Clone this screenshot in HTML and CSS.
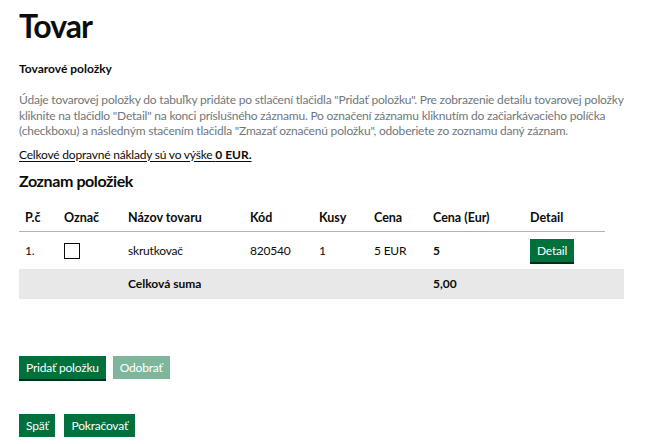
FILE: index.html
```html
<!DOCTYPE html>
<html lang="sk">
<head>
<meta charset="utf-8">
<title>Tovar</title>
<link rel="stylesheet" href="styles.css">
</head>
<body>
<main class="page">
  <h1 class="title">Tovar</h1>
  <h2 class="subtitle">Tovarové položky</h2>
  <p class="hint">Údaje tovarovej položky do tabuľky pridáte po stlačení tlačidla "Pridať položku". Pre zobrazenie detailu tovarovej položky kliknite na tlačidlo "Detail" na konci príslušného záznamu. Po označení záznamu kliknutím do začiarkávacieho políčka (checkboxu) a následným stačením tlačidla "Zmazať označenú položku", odoberiete zo zoznamu daný záznam.</p>
  <p class="shipping">Celkové dopravné náklady sú vo výške <strong>0 EUR.</strong></p>
  <h2 class="section">Zoznam položiek</h2>
  <table class="items">
    <colgroup>
      <col class="c-no"><col class="c-mark"><col class="c-name"><col class="c-code"><col class="c-qty"><col class="c-price"><col class="c-eur"><col class="c-detail"><col class="c-pad">
    </colgroup>
    <thead>
      <tr><th>P.č</th><th>Označ</th><th>Názov tovaru</th><th>Kód</th><th>Kusy</th><th>Cena</th><th>Cena (Eur)</th><th>Detail</th><th class="pad"></th></tr>
    </thead>
    <tbody>
      <tr class="row">
        <td>1.</td>
        <td><span class="checkbox"></span></td>
        <td>skrutkovač</td>
        <td>820540</td>
        <td>1</td>
        <td>5 EUR</td>
        <td class="strong">5</td>
        <td><button class="btn btn-small">Detail</button></td>
        <td></td>
      </tr>
      <tr class="total">
        <td></td><td></td><td class="strong">Celková suma</td><td></td><td></td><td></td><td class="strong">5,00</td><td></td><td></td>
      </tr>
    </tbody>
  </table>
  <div class="actions actions-top">
    <button class="btn">Pridať položku</button>
    <button class="btn btn-disabled">Odobrať</button>
  </div>
  <div class="actions actions-bottom">
    <button class="btn">Späť</button>
    <button class="btn">Pokračovať</button>
  </div>
</main>
</body>
</html>
```
FILE: styles.css
```css
html, body {
  margin: 0;
  padding: 0;
  background: #ffffff;
}
body {
  font-family: "Lato", "Noto Sans", "Liberation Sans", sans-serif;
  color: #0b0c0c;
}
.page {
  padding: 6px 19px 0 19px;
}
.title {
  font-size: 32px;
  line-height: 40px;
  font-weight: 700;
  letter-spacing: -1px;
  margin: 0 0 15px 0;
}
.subtitle {
  font-size: 12px;
  line-height: 16px;
  font-weight: 700;
  margin: 0 0 15px 0;
}
.hint {
  font-size: 12px;
  letter-spacing: -0.2px;
  line-height: 15.5px;
  color: #6f777b;
  margin: 0 0 8px 0;
}
.shipping {
  font-size: 12px;
  letter-spacing: -0.2px;
  line-height: 16px;
  margin: 0 0 7px 0;
  text-decoration: underline;
  text-underline-offset: 2px;
}
.shipping strong {
  letter-spacing: 0;
}
.section {
  font-size: 16px;
  line-height: 22px;
  font-weight: 700;
  letter-spacing: -0.4px;
  margin: 0 0 13px 0;
}
.items {
  border-collapse: collapse;
  table-layout: fixed;
  width: 605px;
  font-size: 12px;
}
.c-no { width: 39px; }
.c-mark { width: 64px; }
.c-name { width: 122px; }
.c-code { width: 69px; }
.c-qty { width: 55px; }
.c-price { width: 59px; }
.c-eur { width: 97px; }
.c-detail { width: 81px; }
.c-pad { width: 19px; }
.items th {
  text-align: left;
  font-size: 12.5px;
  font-weight: 700;
  padding: 5px 6px 5px 6px;
  line-height: 16px;
  border-bottom: 1px solid #b1b4b6;
}
.items th.pad {
  border-bottom: none;
}
.items td {
  padding: 0 6px;
  line-height: 16px;
  letter-spacing: -0.2px;
}
.row td {
  height: 36px;
  padding-top: 1px;
}
.total td {
  background: #e8e8e8;
  height: 30px;
}
.items td.strong {
  font-weight: 700;
  letter-spacing: 0;
}
.checkbox {
  display: inline-block;
  width: 14px;
  height: 14px;
  border: 1px solid #0b0c0c;
  vertical-align: middle;
}
.btn {
  font-family: inherit;
  font-size: 12px;
  letter-spacing: -0.2px;
  line-height: 16px;
  color: #ffffff;
  background: #00703c;
  border: none;
  border-radius: 0;
  box-shadow: 0 2px 0 #002d18;
  padding: 4px 7px 3px 7px;
  margin: 0;
  cursor: pointer;
}
.btn-small {
  padding: 4px 7px 3px 7px;
}
.btn-disabled {
  opacity: 0.5;
  box-shadow: none;
}
.actions {
  display: flex;
  gap: 7px;
}
.actions-top {
  margin-top: 57px;
}
.actions-bottom {
  margin-top: 35px;
  gap: 9px;
}
```
